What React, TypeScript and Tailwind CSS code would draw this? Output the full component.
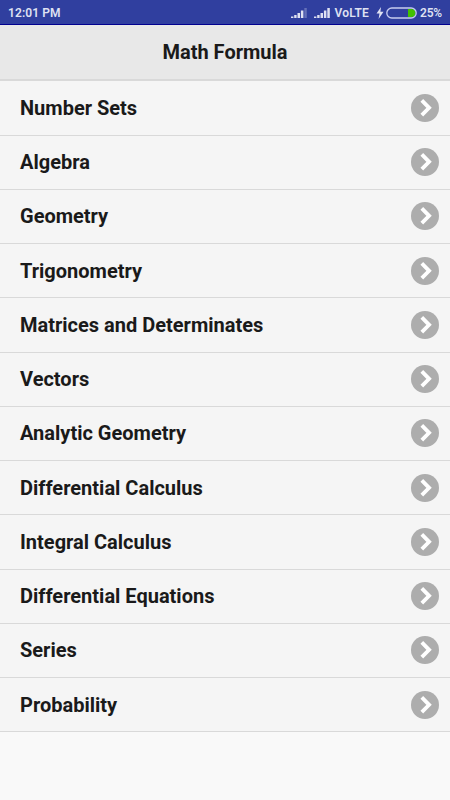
import React from "react";

const topics = [
  "Number Sets",
  "Algebra",
  "Geometry",
  "Trigonometry",
  "Matrices and Determinates",
  "Vectors",
  "Analytic Geometry",
  "Differential Calculus",
  "Integral Calculus",
  "Differential Equations",
  "Series",
  "Probability",
];

const Signal = ({ weak = false }: { weak?: boolean }) => (
  <svg width="16" height="12" viewBox="0 0 16 12" className="fill-current">
    <rect x="0" y="9.5" width="2.4" height="1.5" />
    <rect x="3.2" y="8" width="2.4" height="3" />
    <rect x="6.5" y="6" width="2.5" height="5" />
    <rect x="9.9" y="3.5" width="2.5" height="7.5" />
    <rect x="13.3" y="1" width="2.5" height="10" opacity={weak ? 0.3 : 1} />
  </svg>
);

const StatusBar = () => (
  <div className="flex h-[25px] items-center justify-between border-b border-[#00008f] bg-[#303f9f] px-2 text-[12px] font-semibold text-[#dfe1f2]">
    <span className="pt-0.5 tracking-[0.1px]">12:01 PM</span>
    <div className="flex items-center pt-0.5">
      <Signal weak />
      <span className="w-[7px]" />
      <Signal />
      <span className="ml-1 tracking-[0.2px]">VoLTE</span>
      <svg width="8" height="14" viewBox="0 0 8 14" className="ml-[7px] fill-current">
        <path d="M5 1 0.5 7.6h3L2.6 13 7.5 5.8H4.4z" />
      </svg>
      <svg width="31" height="12" viewBox="0 0 31 12" className="ml-[2px]">
        <path d="M22 2h3.5a4 4 0 0 1 0 8H22z" fill="#42c100" />
        <rect x="0.8" y="1" width="29.4" height="10" rx="5" fill="none" stroke="#c6cbf0" strokeWidth="1.3" />
      </svg>
      <span className="ml-[3px] tracking-[-0.2px]">25%</span>
    </div>
  </div>
);

const App = () => {
  return (
    <div className="min-h-screen bg-[#f9f9f9] font-[Roboto,sans-serif] text-[#1a1a1a]">
      <StatusBar />
      <header className="flex h-[56.25px] items-center justify-center border-b-2 border-[#d9d9d9] bg-[#e8e8e8]">
        <h1 className="text-[20px] font-bold">Math Formula</h1>
      </header>
      <ul>
        {topics.map((topic) => (
          <li
            key={topic}
            className="flex h-[54.25px] items-center justify-between border-b border-[#d9d9d9] bg-[#f5f5f5] pr-[11px] pl-5"
          >
            <span className="text-[20px] font-bold">{topic}</span>
            <svg width="28" height="28" viewBox="0 0 28 28">
              <circle cx="14" cy="14" r="14" fill="#adadad" />
              <path d="M10.8 6.4 18.1 13.8 10.8 21.2" fill="none" stroke="#fff" strokeWidth="3.8" />
            </svg>
          </li>
        ))}
      </ul>
    </div>
  );
};

export default App;
